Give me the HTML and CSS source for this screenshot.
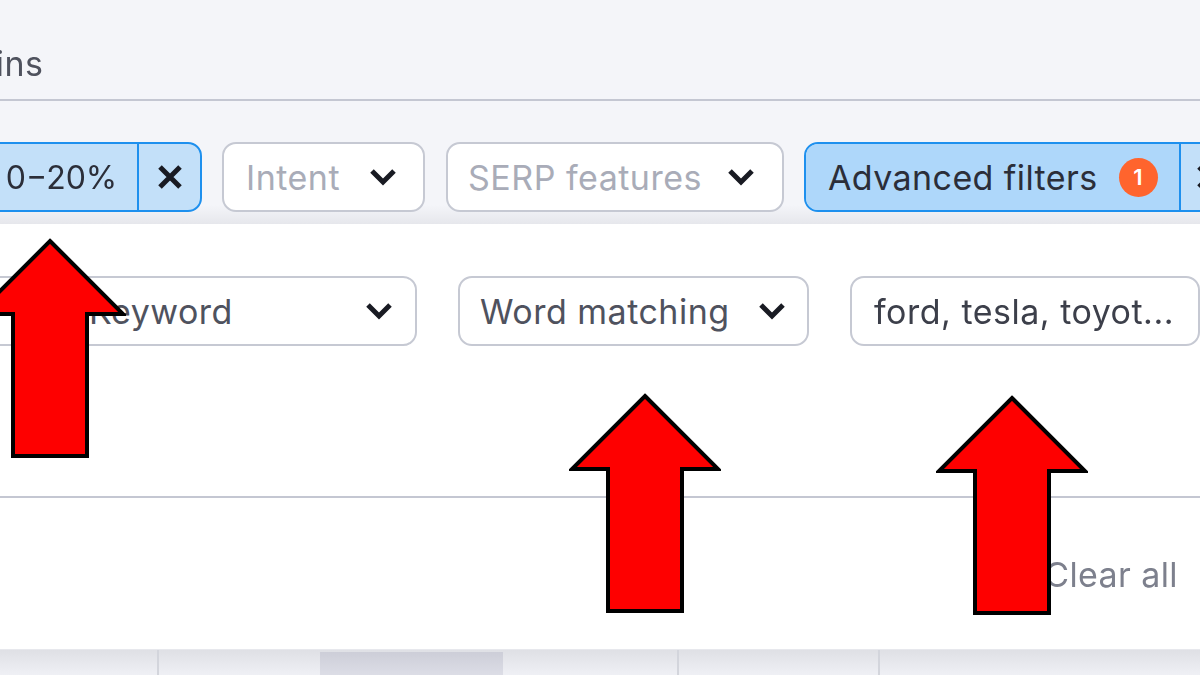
FILE: index.html
```html
<!DOCTYPE html>
<html lang="en">
<head>
    <meta charset="UTF-8">
    <meta name="viewport" content="width=device-width, initial-scale=1.0">
    <title>Keyword filters</title>
    <link rel="stylesheet" href="styles.css">
</head>
<body>
<div class="page">
    <div class="top">
        <div class="tabs"><span class="tab">Domains</span></div>
        <div class="filters">
            <div class="chip chip-kd">
                <span class="chip-label">KD 0&minus;20%</span>
                <span class="chip-x"><svg width="26" height="26" viewBox="0 0 26 26"><path d="M3 3L23 23M23 3L3 23" fill="none" stroke="#191b23" stroke-width="5"/></svg></span>
            </div>
            <div class="select muted intent"><span>Intent</span>
                <svg class="caret" width="28" height="18" viewBox="0 0 28 18"><path d="M3 3L14 14L25 3" fill="none" stroke="#191b23" stroke-width="5"/></svg>
            </div>
            <div class="select muted serp"><span>SERP features</span>
                <svg class="caret" width="28" height="18" viewBox="0 0 28 18"><path d="M3 3L14 14L25 3" fill="none" stroke="#191b23" stroke-width="5"/></svg>
            </div>
            <div class="chip chip-adv">
                <span class="chip-label">Advanced filters <b class="badge">1</b></span>
                <span class="chip-x"><svg width="26" height="26" viewBox="0 0 26 26"><path d="M3 3L23 23M23 3L3 23" fill="none" stroke="#191b23" stroke-width="5"/></svg></span>
            </div>
        </div>
    </div>
    <div class="panel">
        <div class="panel-row">
            <div class="select kw"><span>Keyword</span>
                <svg class="caret" width="28" height="18" viewBox="0 0 28 18"><path d="M3 3L14 14L25 3" fill="none" stroke="#191b23" stroke-width="5"/></svg>
            </div>
            <div class="select match"><span>Word matching</span>
                <svg class="caret" width="28" height="18" viewBox="0 0 28 18"><path d="M3 3L14 14L25 3" fill="none" stroke="#191b23" stroke-width="5"/></svg>
            </div>
            <div class="select words"><span>ford, tesla, toyot...</span></div>
        </div>
        <div class="panel-foot"><span class="clear">Clear all</span></div>
    </div>
    <div class="thead">
        <div class="th th1"></div>
        <div class="th th2"></div>
        <div class="th th3"></div>
        <div class="th th4"></div>
        <div class="th th5"></div>
        <div class="th th6"></div>
    </div>

    <!-- red arrows drawn over the ui -->
    <svg class="arrow a1" width="152" height="222" viewBox="0 0 152 222"><path d="M76 3L149 76H113V218H39V76H3Z" fill="#fe0000" stroke="#000" stroke-width="4"/></svg>
    <svg class="arrow a2" width="152" height="222" viewBox="0 0 152 222"><path d="M76 3L149 76H113V218H39V76H3Z" fill="#fe0000" stroke="#000" stroke-width="4"/></svg>
    <svg class="arrow a3" width="152" height="222" viewBox="0 0 152 222"><path d="M76 3L149 76H113V218H39V76H3Z" fill="#fe0000" stroke="#000" stroke-width="4"/></svg>
</div>
</body>
</html>
```

FILE: styles.css
```css
body {
    margin: 0;
    font-family: Inter, "Noto Sans", sans-serif;
    background: #fff;
}
.page {
    position: relative;
    width: 1200px;
    height: 675px;
    overflow: hidden;
    display: flex;
    flex-direction: column;
}
/* the reference is an upscaled shot, so the ui is a bit soft */
.top, .panel, .thead { filter: blur(0.6px); }
.top {
    height: 224px;
    flex: none;
    background: linear-gradient(#f4f5f9 205px, #e6e7ec 224px);
}
.tabs {
    height: 101px;
    box-sizing: border-box;
    border-bottom: 2px solid #c4c7d2;
    display: flex;
    align-items: flex-end;
    padding-bottom: 15px;
}
.tab {
    margin-left: -100px;
    font-size: 34px;
    letter-spacing: .5px;
    line-height: 40px;
    color: #4f525e;
}
.filters {
    display: flex;
    align-items: center;
    margin-top: 41px;
    margin-left: -300px;
}
.chip {
    display: flex;
    height: 70px;
    box-sizing: border-box;
    border: 2px solid #1e90ee;
    border-radius: 14px;
    background: #c3e0f9;
    flex: none;
    overflow: hidden;
}
.chip-label {
    display: flex;
    align-items: center;
    font-size: 32px;
    color: #2b2e39;
    box-sizing: border-box;
    border-right: 2px solid #1e90ee;
}
.chip-x {
    display: flex;
    align-items: center;
    justify-content: center;
    width: 61px;
}
.chip-kd { width: 502px; }
.chip-kd .chip-label { width: 439px; justify-content: flex-end; padding-right: 20px; }
.chip-adv {
    width: 460px;
    margin-left: 20px;
}
.chip-adv .chip-label {
    width: 375px;
    padding-left: 22px;
    flex: none;
    font-size: 34px;
    letter-spacing: .4px;
    background: #aed7fa;
}
.chip-adv .chip-x { justify-content: flex-start; padding-left: 15px; }
.badge {
    display: flex;
    align-items: center;
    justify-content: center;
    width: 39px;
    height: 39px;
    margin-left: 21px;
    border-radius: 50%;
    background: #ff642d;
    color: #fff;
    font-size: 22px;
    font-weight: 600;
    letter-spacing: 0;
}
.select {
    display: flex;
    align-items: center;
    justify-content: space-between;
    height: 70px;
    box-sizing: border-box;
    flex: none;
    padding: 0 22px;
    background: #fff;
    border: 2px solid #c6c9d3;
    border-radius: 14px;
    font-size: 34px;
    letter-spacing: .5px;
    color: #4f525e;
}
.muted { color: #a9acb8; }
.intent { width: 203px; margin-left: 20px; padding-right: 26px; }
.serp { width: 338px; margin-left: 21px; padding: 0 27px 0 20px; }
.panel {
    flex: 1;
    display: flex;
    flex-direction: column;
}
.panel-row {
    display: flex;
    gap: 41px;
    margin-top: 52px;
    margin-left: -100px;
    padding-bottom: 150px;
    border-bottom: 2px solid #c4c7d2;
}
.kw { width: 517px; padding: 0 22px 0 187px; }
.match { width: 351px; padding: 0 21px 0 20px; }
.words { width: 350px; color: #3c3f4a; }
.panel-foot {
    flex: 1;
    display: flex;
    justify-content: flex-end;
    padding: 57px 22px 0 0;
}
.clear {
    font-size: 34px;
    letter-spacing: .4px;
    line-height: 40px;
    color: #7d808d;
}
.thead {
    height: 25px;
    flex: none;
    display: flex;
    background: linear-gradient(#dfe0e5, #eff0f5);
    border-top: 1px solid #e7e8ed;
}
.th { box-sizing: border-box; border-right: 2px solid #d3d5dc; flex: none; }
.th1 { width: 159px; }
.th2 { width: 161px; border-right: 0; }
.th3 { width: 183px; margin-top: 2px; background: linear-gradient(#cdced8, #dcdde6); border-right: 0; }
.th4 { width: 176px; }
.th5 { width: 201px; }
.th6 { flex: 1; border-right: 0; }
.arrow { position: absolute; }
.a1 { left: -26px; top: 238px; }
.a2 { left: 569px; top: 393px; }
.a3 { left: 936px; top: 395px; }
```
